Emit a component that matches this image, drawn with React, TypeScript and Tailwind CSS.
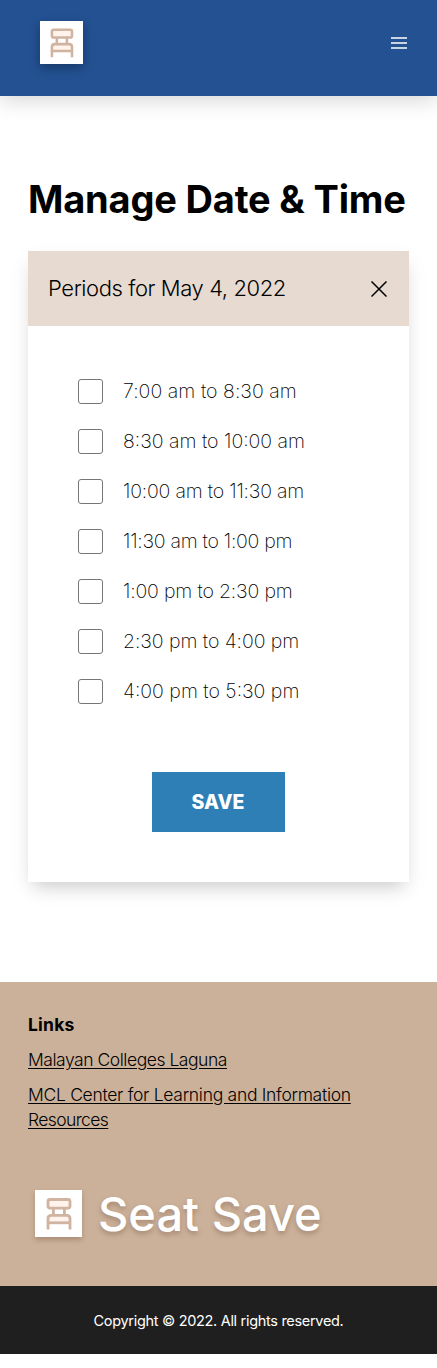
import { useState } from "react";

const periods = [
  { label: "7:00 am to 8:30 am", tracking: "tracking-[0.05px]" },
  { label: "8:30 am to 10:00 am", tracking: "tracking-[0px]" },
  { label: "10:00 am to 11:30 am", tracking: "tracking-[-0.2px]" },
  { label: "11:30 am to 1:00 pm", tracking: "tracking-[-0.27px]" },
  { label: "1:00 pm to 2:30 pm", tracking: "tracking-[-0.17px]" },
  { label: "2:30 pm to 4:00 pm", tracking: "tracking-[-0.05px]" },
  { label: "4:00 pm to 5:30 pm", tracking: "tracking-[0px]" },
];

function SeatIcon({ className }: { className: string }) {
  return (
    <svg viewBox="0 0 47 47" className={className} fill="none" stroke="#d0b3a0" strokeWidth="2.8">
      <rect width="47" height="47" fill="#fff" stroke="none" />
      <path d="M14 26h20v6H14z" fill="#fff3ec" stroke="none" />
      <rect x="13" y="9.5" width="22" height="8.6" rx="2" fill="#fff3ec" />
      <path d="M18.4 18v7M29.4 18v7" />
      <path d="M13 39.6V28.4q0-3.1 3.2-3.1h15.6q3.2 0 3.2 3.1v11.2" />
      <path d="M13 32.8h22" />
    </svg>
  );
}

export default function App() {
  const [checked, setChecked] = useState<number[]>([]);
  const toggle = (i: number) =>
    setChecked((c) => (c.includes(i) ? c.filter((n) => n !== i) : [...c, i]));

  return (
    <div className="flex min-h-[1368px] flex-col bg-white font-['Inter',sans-serif] text-black">
      <header className="flex h-24 shrink-0 items-start justify-between bg-[#235192] pr-[30px] pl-10 shadow-[0_4px_20px_rgba(0,0,0,0.17)]">
        <SeatIcon className="mt-[20.5px] h-[43px] w-[43px] shadow-[0_4px_10px_rgba(0,0,0,0.3)]" />
        <button aria-label="Menu" className="mt-[37px] flex w-[16px] flex-col gap-[3px]">
          <span className="h-[2px] bg-[#c8d3e4]" />
          <span className="h-[2px] bg-[#c8d3e4]" />
          <span className="h-[2px] bg-[#c8d3e4]" />
        </button>
      </header>

      <main className="flex flex-col px-7 pt-[78px] pb-[100px]">
        <h1 className="mb-[27px] h-[50px] text-[38px] leading-[50px] font-bold tracking-[-0.18px] whitespace-nowrap">
          Manage Date &amp; Time
        </h1>
        <section className="h-[631px] bg-white shadow-[0_8px_24px_-2px_rgba(0,0,0,0.07),0_10px_16px_-6px_rgba(0,0,0,0.15)]">
          <div className="flex h-[75px] items-center justify-between bg-[#e7dad1] pr-[22px] pl-5">
            <h2 className="text-[22px] font-light tracking-[-0.41px] whitespace-nowrap">Periods for May 4, 2022</h2>
            <button aria-label="Close">
              <svg viewBox="0 0 16 16" className="h-4 w-4" stroke="#000" strokeWidth="1.5">
                <path d="M.5.5l15 15M15.5.5l-15 15" />
              </svg>
            </button>
          </div>
          <div className="flex flex-col gap-[25px] pt-[53px] pl-[50px]">
            {periods.map((p, i) => (
              <label key={p.label} className="flex h-[25px] items-center gap-5">
                <input
                  type="checkbox"
                  checked={checked.includes(i)}
                  onChange={() => toggle(i)}
                  className="h-[25px] w-[25px] shrink-0 appearance-none rounded-[3px] border border-[#767676] checked:bg-[#2f7fb7]"
                />
                <span className={`text-[19.5px] leading-[25px] font-extralight whitespace-nowrap ${p.tracking}`}>{p.label}</span>
              </label>
            ))}
          </div>
          <div className="flex justify-center pt-[68px]">
            <button className="mr-px h-[60px] w-[133px] bg-[#2f7fb7] pt-0.5 text-[19.5px] font-extrabold tracking-[0.1px] text-white">
              SAVE
            </button>
          </div>
        </section>
      </main>

      <footer className="flex flex-col">
        <div className="flex h-[304px] flex-col items-start bg-[#cbb19a] px-7 pt-[30px]">
          <h3 className="mb-[10px] text-[17.5px] leading-[25px] font-bold tracking-[0.2px]">Links</h3>
          <a href="#" className="mb-[10px] text-[17.5px] leading-[25px] font-light tracking-[-0.46px] underline underline-offset-2">
            Malayan Colleges Laguna
          </a>
          <a href="#" className="text-[17.5px] leading-[25px] font-light tracking-[-0.29px] underline underline-offset-2">
            MCL Center for Learning and Information
            <br />
            <span className="tracking-[-0.6px]">Resources</span>
          </a>
          <div className="mt-[58px] ml-[7px] flex h-[47px] items-center gap-4">
            <SeatIcon className="h-[47px] w-[47px] shadow-[0_3px_5px_rgba(100,60,40,0.3)]" />
            <span className="text-[47px] leading-[47px] font-medium whitespace-nowrap text-white [text-shadow:0_3px_5px_rgba(100,60,40,0.35)]">
              Seat Save
            </span>
          </div>
        </div>
        <div className="flex h-[68px] items-center justify-center bg-[#1f1f1f] pt-0.5">
          <p className="text-[14.5px] tracking-[-0.31px] whitespace-nowrap text-white">Copyright © 2022. All rights reserved.</p>
        </div>
      </footer>
    </div>
  );
}
